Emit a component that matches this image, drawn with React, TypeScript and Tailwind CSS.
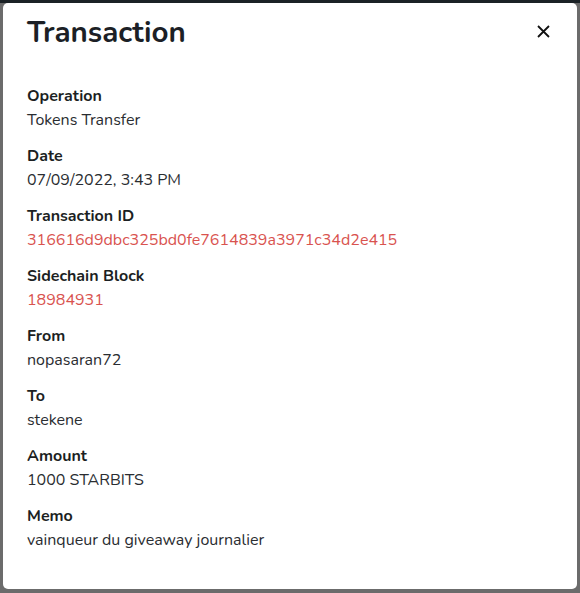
import React from "react"

const Field = ({ label, value, link }: { label: string; value: string; link?: boolean }) => (
  <div className="flex flex-col">
    <p className="text-[16px] leading-6 font-bold text-[#1c1f23]">{label}</p>
    <p className={`text-[16px] leading-6 ${link ? "text-[#d9534f]" : "text-[#2a2d31]"}`}>{value}</p>
  </div>
)

const App = () => {
  return (
    <div
      className="w-[580px] h-[593px] bg-[#6b6b6b] flex flex-col overflow-hidden"
      style={{ fontFamily: "Nunito, Lato, 'Noto Sans', sans-serif" }}
    >
      <div className="h-[3px] bg-[#1b2226] shrink-0" />
      <div className="mx-[3px] h-[586px] bg-white rounded-[5px] flex flex-col">
        <div className="flex items-center justify-between pl-6 pr-6 pt-[12px] h-[46px]">
          <h1 className="text-[29.5px] font-bold text-[#1c1f26] leading-9">Transaction</h1>
          <svg width="13" height="13" viewBox="0 0 13 13" className="mr-[3px] mt-[-2px]">
            <path d="M1 1L12 12M12 1L1 12" stroke="#111" strokeWidth="1.8" />
          </svg>
        </div>
        <div className="flex flex-col gap-3 pl-6 pt-[35px]">
          <Field label="Operation" value="Tokens Transfer" />
          <Field label="Date" value="07/09/2022, 3:43 PM" />
          <Field label="Transaction ID" value="316616d9dbc325bd0fe7614839a3971c34d2e415" link />
          <Field label="Sidechain Block" value="18984931" link />
          <Field label="From" value="nopasaran72" />
          <Field label="To" value="stekene" />
          <Field label="Amount" value="1000 STARBITS" />
          <Field label="Memo" value="vainqueur du giveaway journalier" />
        </div>
      </div>
    </div>
  )
}

export default App
